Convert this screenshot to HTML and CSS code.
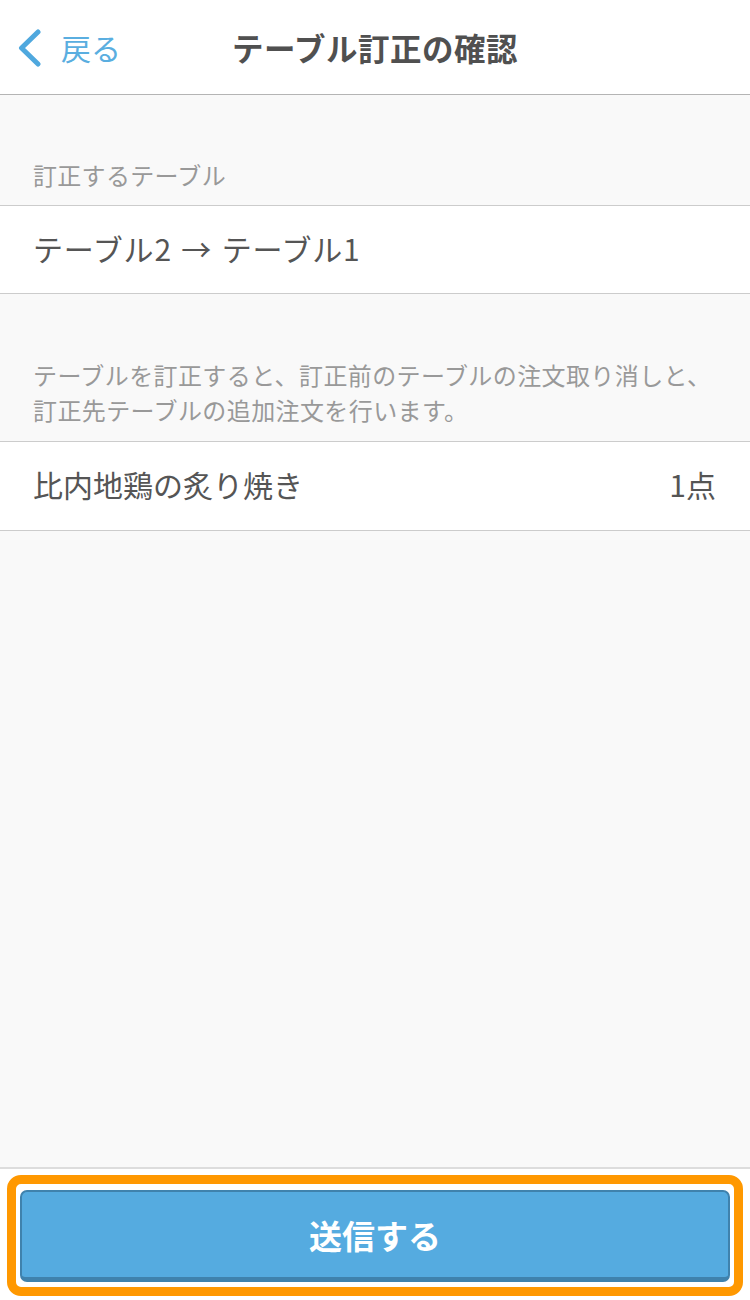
FILE: index.html
```html
<!DOCTYPE html>
<html lang="ja">
<head>
<meta charset="utf-8">
<title>テーブル訂正の確認</title>
<link rel="stylesheet" href="styles.css">
</head>
<body>
<div class="page">
  <header class="nav">
    <div class="nav-left">
      <svg class="chev" width="24" height="38" viewBox="0 0 24 38"><path d="M20 3 L3.5 19 L20 35" fill="none" stroke="#4fa8de" stroke-width="5" stroke-linecap="round" stroke-linejoin="round"/></svg>
      <span class="back">戻る</span>
    </div>
    <div class="nav-title">テーブル訂正の確認</div>
    <div class="nav-right"></div>
  </header>

  <div class="label">訂正するテーブル</div>
  <div class="row">
    <span class="row-text row-change">テーブル2 → テーブル1</span>
  </div>

  <div class="note">テーブルを訂正すると、訂正前のテーブルの注文取り消しと、<br>訂正先テーブルの追加注文を行います。</div>
  <div class="row row-item">
    <span class="row-text">比内地鶏の炙り焼き</span>
    <span class="row-text">1点</span>
  </div>

  <div class="filler"></div>

  <footer class="footer">
    <div class="highlight">
      <div class="send">送信する</div>
    </div>
  </footer>
</div>
</body>
</html>
```

FILE: styles.css
```css
* { box-sizing: border-box; }
html, body { margin: 0; padding: 0; }
body {
  background: #f9f9f9;
  font-family: "Noto Sans CJK JP", "Noto Sans", sans-serif;
  color: #555555;
}
.page {
  width: 750px;
  height: 1300px;
  display: flex;
  flex-direction: column;
}
.nav {
  height: 95px;
  background: #ffffff;
  border-bottom: 1px solid #b4b4b4;
  display: grid;
  grid-template-columns: 1fr auto 1fr;
  align-items: center;
}
.nav-left {
  display: flex;
  align-items: center;
  padding-left: 18px;
  gap: 19px;
}
.chev { display: block; margin-top: 2px; }
.back {
  font-size: 30px;
  line-height: 40px;
  color: #5aaee0;
}
.nav-title {
  font-size: 31.5px;
  font-weight: 700;
  color: #505050;
  line-height: 40px;
  letter-spacing: 0.5px;
}
.label {
  padding: 63px 0 13px 33px;
  font-size: 24px;
  line-height: 34px;
  letter-spacing: 0.3px;
  color: #999999;
}
.row {
  background: #ffffff;
  border-top: 1px solid #cccccc;
  border-bottom: 1px solid #cccccc;
  height: 89px;
  display: flex;
  align-items: center;
  justify-content: space-between;
  padding: 0 34px 4px 33px;
}
.row-text {
  font-size: 30px;
  line-height: 40px;
  color: #555555;
}
.row-change { letter-spacing: 0.8px; word-spacing: 2px; }
.note {
  padding: 64px 0 15px 33px;
  font-size: 24px;
  line-height: 35px;
  letter-spacing: 0.4px;
  color: #999999;
  margin-top: -1px;
}
.row-item { height: 90px; margin-top: -1px; }
.filler { flex: 1; }
.footer {
  background: #ffffff;
  border-top: 2px solid #dddddd;
  padding: 6px 7px 4px 7px;
}
.highlight {
  border: 9px solid #ff9800;
  border-radius: 14px;
  background: #ffffff;
  padding: 6px 4px 5px 4px;
}
.send {
  height: 92px;
  background: #55abe0;
  border: 2px solid #3f82ad;
  border-bottom-width: 5px;
  border-radius: 7px;
  display: flex;
  align-items: center;
  justify-content: center;
  color: #ffffff;
  font-size: 33px;
  font-weight: 700;
  line-height: 40px;
}
```
